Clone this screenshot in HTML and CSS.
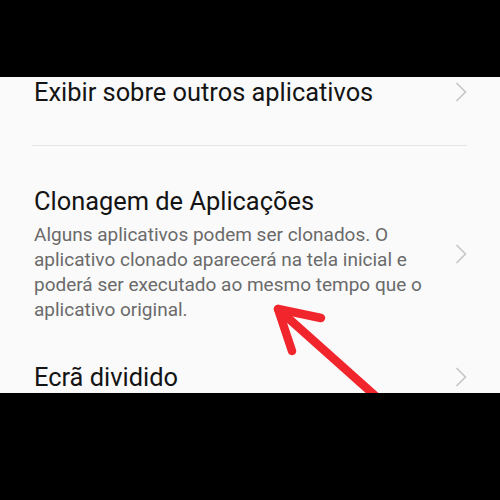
FILE: index.html
```html
<!DOCTYPE html>
<html lang="pt">
<head>
<meta charset="utf-8">
<link rel="stylesheet" href="styles.css">
</head>
<body>
<div class="screen">
  <div class="band-top"></div>
  <div class="content">
    <div class="row row-first">
      <div class="text">
        <div class="title">Exibir sobre outros aplicativos</div>
      </div>
      <svg class="chev" viewBox="0 0 12 20" width="12" height="20"><path d="M1.5 1 L10.5 10 L1.5 19" fill="none" stroke="#c6c6c6" stroke-width="1.6"/></svg>
    </div>
    <div class="divider"></div>
    <div class="row row-mid">
      <div class="text">
        <div class="title">Clonagem de Aplicações</div>
        <div class="desc">Alguns aplicativos podem ser clonados. O aplicativo clonado aparecerá na tela inicial e poderá ser executado ao mesmo tempo que o aplicativo original.</div>
      </div>
      <svg class="chev" viewBox="0 0 12 20" width="12" height="20"><path d="M1.5 1 L10.5 10 L1.5 19" fill="none" stroke="#c6c6c6" stroke-width="1.6"/></svg>
    </div>
    <div class="row row-last">
      <div class="text">
        <div class="title">Ecrã dividido</div>
      </div>
      <svg class="chev" viewBox="0 0 12 20" width="12" height="20"><path d="M1.5 1 L10.5 10 L1.5 19" fill="none" stroke="#c6c6c6" stroke-width="1.6"/></svg>
    </div>
    <svg class="arrow" viewBox="0 0 500 316" width="500" height="316">
      <g fill="none" stroke="#f1262c" stroke-width="8.5" stroke-linecap="round" stroke-linejoin="round">
        <path d="M278 232 L390 332"/>
        <path d="M321 241 L278 232 L292 274"/>
      </g>
    </svg>
  </div>
  <div class="band-bottom"></div>
</div>
</body>
</html>
```
FILE: styles.css
```css
html, body {
  margin: 0;
  padding: 0;
  background: #000;
}
.screen {
  width: 500px;
  height: 500px;
  display: flex;
  flex-direction: column;
}
.band-top {
  height: 77px;
  background: #000;
  flex: none;
}
.content {
  position: relative;
  height: 316px;
  flex: none;
  background: #fafafa;
  overflow: hidden;
  font-family: Roboto, "Noto Sans", sans-serif;
  padding: 0 33px 0 34px;
}
.band-bottom {
  flex: 1;
  background: #000;
}
.row {
  display: flex;
  align-items: center;
  justify-content: space-between;
}
.row-first {
  padding: 0 0 38px 0;
}
.row-mid {
  padding: 40px 0 20px 0;
}
.row-last {
  padding: 20px 0 0 0;
}
.text {
  flex: 1;
  min-width: 0;
}
.title {
  font-size: 25.4px;
  line-height: 30px;
  color: #141414;
}
.desc {
  margin-top: 6px;
  font-size: 19px;
  line-height: 25px;
  color: #6a6a6a;
  max-width: 395px;
}
.chev {
  flex: none;
  display: block;
}
.divider {
  height: 1px;
  background: #e6e6e6;
  margin-left: -2px;
}
.arrow {
  position: absolute;
  left: 0;
  top: 0;
  pointer-events: none;
}
```
